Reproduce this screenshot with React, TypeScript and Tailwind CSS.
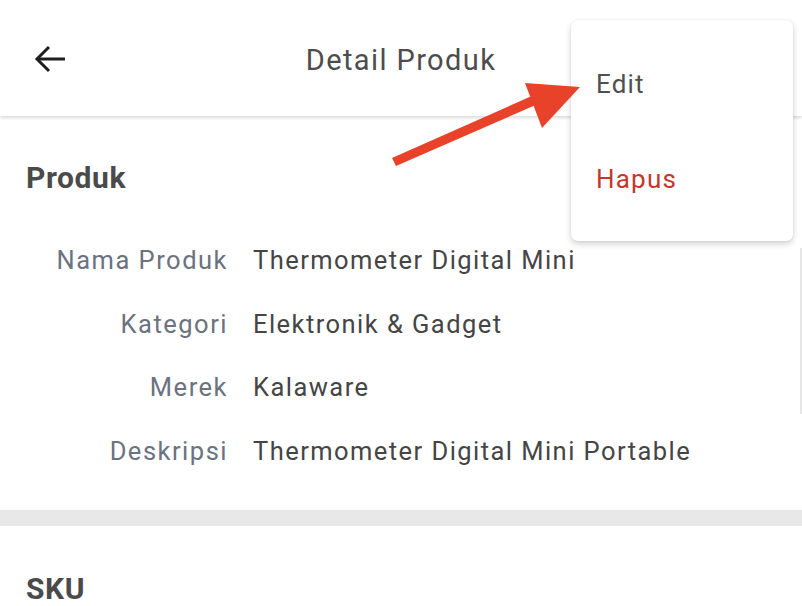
import React from "react";

const rows: [string, string][] = [
  ["Nama Produk", "Thermometer Digital Mini"],
  ["Kategori", "Elektronik & Gadget"],
  ["Merek", "Kalaware"],
  ["Deskripsi", "Thermometer Digital Mini Portable"],
];

export default function App() {
  return (
    <div className="relative w-[802px] h-[606px] overflow-hidden bg-white font-['Roboto',_sans-serif]">
      <header className="relative z-10 h-[116px] grid grid-cols-[1fr_auto_1fr] items-center bg-white shadow-[0_2px_3px_rgba(0,0,0,0.14)]">
        <div className="pl-[33px] pt-[1px] flex items-center">
          <svg width="34" height="32" viewBox="0 0 34 32" fill="none" stroke="#1f1f1f" strokeWidth="3">
            <path d="M32 16H4" />
            <path d="M16 4L4 16L16 28" />
          </svg>
        </div>
        <h1 className="pt-[4px] text-[29px] leading-none text-[#4d4d4d] tracking-[1.4px]">Detail Produk</h1>
        <div />
      </header>

      <section className="pt-[44px] pb-[27px]">
        <h2 className="px-[26px] text-[30px] leading-[36px] font-bold text-[#4a4a4a] tracking-[0.6px]">Produk</h2>
        <div className="mt-[33px] grid grid-cols-[228px_1fr] gap-x-[25px]">
          {rows.map(([k, v]) => (
            <React.Fragment key={k}>
              <div className="text-right text-[25.5px] leading-[63.5px] text-[#6b7280] tracking-[1.5px]">{k}</div>
              <div className="text-[25.5px] leading-[63.5px] text-[#454545] tracking-[1.45px]">{v}</div>
            </React.Fragment>
          ))}
        </div>
      </section>

      <div className="h-[16px] bg-[#e8e8e8]" />

      <section className="pt-[45px]">
        <h2 className="px-[26px] text-[30px] leading-[36px] font-bold text-[#4a4a4a] tracking-[0.6px]">SKU</h2>
      </section>

      <div className="absolute right-0 top-[248px] w-[2px] h-[166px] bg-[#e6e6e6]" />

      <div className="absolute z-20 left-[571px] top-[20px] w-[222px] h-[221px] rounded-[7px] bg-white shadow-[0_3px_6px_rgba(0,0,0,0.18),0_0_2px_rgba(0,0,0,0.08)] flex flex-col pt-[17px] pb-[15px]">
        <div className="h-[96px] flex items-center px-[25px] text-[26px] text-[#4f4f4f] leading-none tracking-[1.2px]">Edit</div>
        <div className="h-[96px] flex items-center px-[25px] text-[26px] text-[#c0392b] leading-none tracking-[1.2px]">Hapus</div>
      </div>

      <svg className="absolute z-30 left-0 top-0 pointer-events-none" width="802" height="606" viewBox="0 0 802 606">
        <path d="M392 158 L396 166 L538 104 L534 95 Z" fill="#e8432a" />
        <polygon points="525,83 580,87 542,128" fill="#e8432a" />
      </svg>
    </div>
  );
}
